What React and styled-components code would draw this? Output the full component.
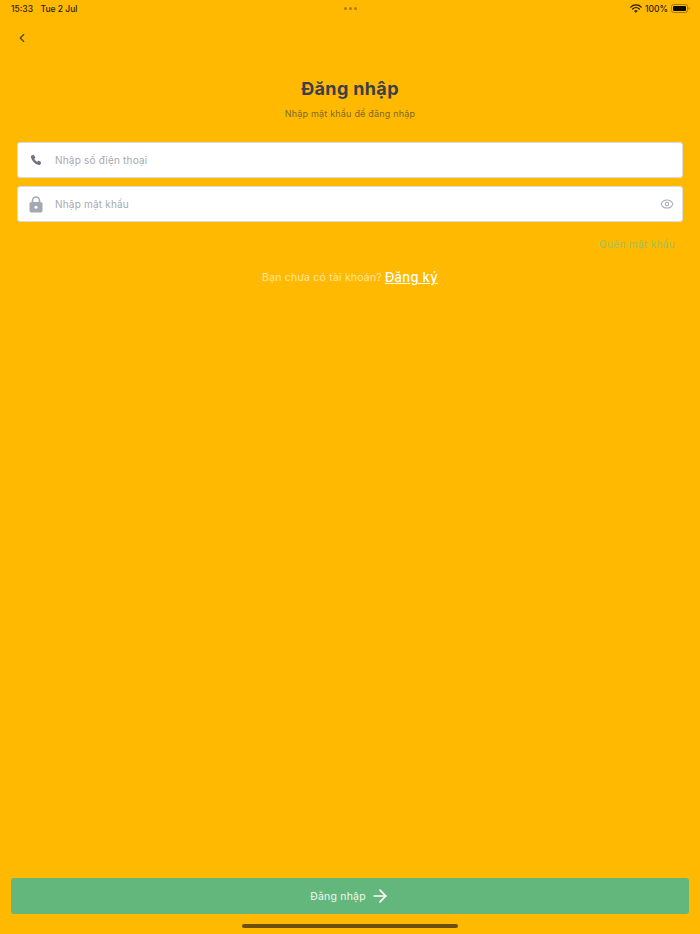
import React from "react"
import styled, { createGlobalStyle } from "styled-components"
import { ChevronLeft, ArrowRight, Eye } from "lucide-react"

const GlobalStyle = createGlobalStyle`
    html, body {
        margin: 0;
        padding: 0;
        background: #ffb900;
    }
    * {
        box-sizing: border-box;
    }
`

const Page = styled.div`
    width: 700px;
    height: 934px;
    display: flex;
    flex-direction: column;
    overflow: hidden;
    background: #ffb900;
    font-family: Inter, "Noto Sans", sans-serif;
    color: #3a3f4b;
`

const StatusBar = styled.div`
    height: 16px;
    padding: 1px 10px 0 11px;
    display: grid;
    grid-template-columns: 1fr auto 1fr;
    align-items: center;
    font-family: Inter, sans-serif;
    font-size: 8.5px;
    font-weight: 500;
    color: #2b2100;
`

const StatusLeft = styled.div`
    display: flex;
    gap: 7.5px;
`

const StatusRight = styled.div`
    display: flex;
    justify-content: flex-end;
    align-items: center;
    gap: 2px;
`

const BatteryText = styled.span`
    margin: 0 1px;
`

const Dots = styled.div`
    display: flex;
    gap: 2px;

    span {
        width: 3px;
        height: 3px;
        border-radius: 50%;
        background: #b5780c;
    }
`

const BackRow = styled.div`
    height: 30px;
    margin-top: 7px;
    padding-left: 15px;
    display: flex;
    align-items: center;
    color: #4a4326;
`

const Title = styled.h1`
    margin: 24px 0 0;
    height: 24px;
    line-height: 24px;
    text-align: center;
    font-size: 18px;
    font-weight: 700;
    letter-spacing: 0.35px;
    color: #3a3f4b;
`

const Subtitle = styled.p`
    margin: 6px 0 0;
    height: 14px;
    line-height: 14px;
    text-align: center;
    font-size: 9px;
    letter-spacing: 0.2px;
    color: #7d6a2c;
`

const Form = styled.div`
    margin-top: 21px;
    padding: 0 17px;
    display: flex;
    flex-direction: column;
    gap: 8px;
`

const Field = styled.div`
    height: 36px;
    padding: 0 8px 0 11px;
    display: flex;
    align-items: center;
    background: #fff;
    border: 1px solid #d9dce3;
    border-radius: 3px;
`

const FieldIcon = styled.div`
    width: 14px;
    margin-right: 12px;
    flex: none;
    display: flex;
    justify-content: center;
    color: ${(props) => props.$color};
`

const Placeholder = styled.span`
    flex: 1;
    font-size: 10px;
    letter-spacing: 0.2px;
    color: #a6a9b2;
`

const EyeIcon = styled(Eye)`
    color: #a9acb5;
`

const Forgot = styled.div`
    margin-top: 15px;
    padding-right: 25px;
    height: 14px;
    line-height: 14px;
    text-align: right;
    font-size: 10px;
    letter-spacing: 0.35px;
    color: #a0c060;
`

const SignupRow = styled.div`
    margin-top: 17px;
    height: 18px;
    display: flex;
    justify-content: center;
    align-items: center;
    gap: 3px;
    font-size: 10.5px;
    letter-spacing: 0.2px;
    color: #ffe6a3;
`

const SignupLink = styled.a`
    font-size: 13px;
    font-weight: 500;
    letter-spacing: 0.3px;
    color: #fff;
    text-decoration: underline;
`

const Footer = styled.div`
    margin-top: auto;
    padding: 0 11px 6px;
    display: flex;
    flex-direction: column;
    align-items: center;
`

const SubmitButton = styled.button`
    width: 100%;
    height: 36px;
    display: flex;
    justify-content: center;
    align-items: center;
    gap: 4px;
    background: #63b77c;
    border: none;
    border-radius: 3px;
    font-family: inherit;
    font-size: 10.5px;
    letter-spacing: 0.2px;
    color: #eef7ee;
`

const HomeBar = styled.div`
    width: 216px;
    height: 4px;
    margin-top: 10px;
    border-radius: 2px;
    background: #6b4f0b;
`

function PhoneGlyph() {
    return (
        <svg width="12" height="12" viewBox="0 0 24 24" fill="currentColor">
            <path d="M6.6 1.8 3 3.2C1.9 3.700 1.600 5 1.900 6.300 4 14.500 9.500 20 17.700 22.100c1.300.3 2.600 0 3.100-1.100l1.400-3.600c.2-.6 0-1.200-.5-1.500l-4-2.400c-.5-.3-1.100-.2-1.500.2l-1.700 1.800C11.700 14.300 9.700 12.300 8.500 9.500l1.800-1.700c.4-.4.5-1 .2-1.500L8.100 2.300c-.3-.5-.9-.7-1.500-.5z" />
        </svg>
    )
}

function LockGlyph() {
    return (
        <svg width="14" height="17" viewBox="0 0 14 17">
            <path d="M3.500 7V4.500a3.500 3.500 0 0 1 7 0V7" fill="none" stroke="currentColor" strokeWidth="1.600" />
            <rect x="0.500" y="6" width="13" height="10.500" rx="1.800" fill="currentColor" />
            <circle cx="7" cy="11.200" r="1.500" fill="#fff" />
        </svg>
    )
}

function WifiGlyph() {
    return (
        <svg width="12" height="9" viewBox="0 0 12 9" fill="none" stroke="#1f1800" strokeLinecap="round">
            <path d="M.8 3.100a7.400 7.400 0 0 1 10.400 0" strokeWidth="1.300" />
            <path d="M2.700 5a4.700 4.700 0 0 1 6.600 0" strokeWidth="1.300" />
            <path d="M4.600 6.900a2 2 0 0 1 2.800 0L6 8.300z" fill="#1f1800" strokeWidth="0.500" />
        </svg>
    )
}

function BatteryGlyph() {
    return (
        <svg width="19" height="9" viewBox="0 0 19 9">
            <rect x="0.500" y="0.500" width="16" height="8" rx="2" fill="none" stroke="#a67c00" />
            <rect x="2" y="2" width="13" height="5" rx="0.800" fill="#0d0a00" />
            <path d="M17.600 3v3c.8-.3 1.200-.8 1.200-1.500S18.400 3.300 17.600 3z" fill="#a67c00" />
        </svg>
    )
}

function App() {
    return (
        <>
            <GlobalStyle />
            <Page>
                <StatusBar>
                    <StatusLeft>
                        <span>15:33</span>
                        <span>Tue 2 Jul</span>
                    </StatusLeft>
                    <Dots>
                        <span />
                        <span />
                        <span />
                    </Dots>
                    <StatusRight>
                        <WifiGlyph />
                        <BatteryText>100%</BatteryText>
                        <BatteryGlyph />
                    </StatusRight>
                </StatusBar>

                <BackRow>
                    <ChevronLeft size={14} strokeWidth={2} />
                </BackRow>

                <Title>Đăng nhập</Title>
                <Subtitle>Nhập mật khẩu để đăng nhập</Subtitle>

                <Form>
                    <Field>
                        <FieldIcon $color="#6f7480">
                            <PhoneGlyph />
                        </FieldIcon>
                        <Placeholder>Nhập số điện thoại</Placeholder>
                    </Field>
                    <Field>
                        <FieldIcon $color="#a4a8b3">
                            <LockGlyph />
                        </FieldIcon>
                        <Placeholder>Nhập mật khẩu</Placeholder>
                        <EyeIcon size={14} strokeWidth={1.75} />
                    </Field>
                </Form>

                <Forgot>Quên mật khẩu</Forgot>

                <SignupRow>
                    Bạn chưa có tài khoản?
                    <SignupLink>Đăng ký</SignupLink>
                </SignupRow>

                <Footer>
                    <SubmitButton>
                        Đăng nhập
                        <ArrowRight size={20} strokeWidth={2} color="#fff" />
                    </SubmitButton>
                    <HomeBar />
                </Footer>
            </Page>
        </>
    )
}

export default App
